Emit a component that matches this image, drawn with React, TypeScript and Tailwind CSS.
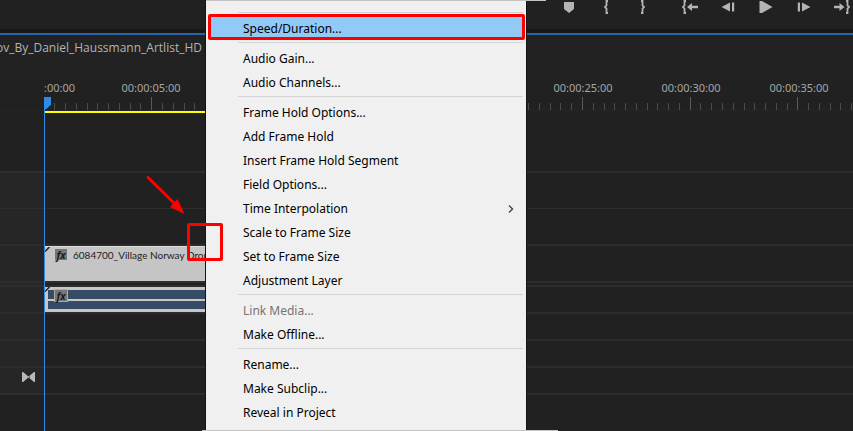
import type { ReactNode } from 'react';
import clsx from 'clsx';

type MenuEntry = {
    label: string;
    active?: boolean;
    disabled?: boolean;
    submenu?: boolean;
};

const MENU_GROUPS: MenuEntry[][] = [
    [{ label: 'Speed/Duration...', active: true }],
    [{ label: 'Audio Gain...' }, { label: 'Audio Channels...' }],
    [
        { label: 'Frame Hold Options...' },
        { label: 'Add Frame Hold' },
        { label: 'Insert Frame Hold Segment' },
        { label: 'Field Options...' },
        { label: 'Time Interpolation', submenu: true },
        { label: 'Scale to Frame Size' },
        { label: 'Set to Frame Size' },
        { label: 'Adjustment Layer' },
    ],
    [{ label: 'Link Media...', disabled: true }, { label: 'Make Offline...' }],
    [{ label: 'Rename...' }, { label: 'Make Subclip...' }, { label: 'Reveal in Project' }],
];

// Labels under the open menu stay empty
const TIMECODES = ['00:00:05:00', '', '', '', '00:00:25:00', '00:00:30:00', '00:00:35:00'];

const TICK_GAP = 10.77;

const BRACE_OPEN = 'M5 1H3.5V5.5L2 7L3.5 8.5V13H5';
const BRACE_CLOSE = 'M1 1H2.5V5.5L4 7L2.5 8.5V13H1';

function ToolButton({ label, width, children }: { label: string; width: number; children: ReactNode }) {
    return (
        <button type="button" aria-label={label} className="flex h-3.5 flex-1 items-center justify-center text-[#b4b4b4]">
            <svg width={width} height="14" viewBox={`0 0 ${width} 14`} fill="currentColor">
                {children}
            </svg>
        </button>
    );
}

function TransportBar() {
    return (
        <div className="flex h-[29px] justify-end gap-2.5 overflow-hidden">
            <div className="flex w-[111px]">
                <ToolButton label="Add Marker" width={10}>
                    <path d="M0 2H10V9L5 13L0 9Z" />
                </ToolButton>
                <ToolButton label="Mark In" width={6}>
                    <path d={BRACE_OPEN} fill="none" stroke="currentColor" strokeWidth="1.8" />
                </ToolButton>
                <ToolButton label="Mark Out" width={6}>
                    <path d={BRACE_CLOSE} fill="none" stroke="currentColor" strokeWidth="1.8" />
                </ToolButton>
            </div>
            <div className="-mr-2 flex w-[190px]">
                <ToolButton label="Go to In" width={18}>
                    <path d={BRACE_OPEN} fill="none" stroke="currentColor" strokeWidth="1.8" />
                    <path d="M6 7L11 3V5.8H17V8.2H11V11Z" />
                </ToolButton>
                <ToolButton label="Step Back" width={14}>
                    <path d="M0.5 7L9 2.5V11.5ZM11 2.5H13.2V11.5H11Z" />
                </ToolButton>
                <ToolButton label="Play" width={14}>
                    <path d="M0.5 1H3L13.5 7L3 13H0.5Z" />
                </ToolButton>
                <ToolButton label="Step Forward" width={14}>
                    <path d="M0.8 2.5H3V11.5H0.8ZM5 2.5L13.5 7L5 11.5Z" />
                </ToolButton>
                <ToolButton label="Go to Out" width={18}>
                    <path d="M11.5 7L6.5 3V5.8H1V8.2H6.5V11Z" />
                    <path d="M13 1H14.5V5.5L16 7L14.5 8.5V13H13" fill="none" stroke="currentColor" strokeWidth="1.8" />
                </ToolButton>
            </div>
        </div>
    );
}

function Ruler() {
    return (
        <div className="border-b border-[#262626]">
            <div className="flex h-4 overflow-hidden text-[11px] leading-4 whitespace-nowrap text-[#a6a6a6]">
                <div className="w-[97px] shrink-0 pl-11">:00:00</div>
                {TIMECODES.map((code, i) => (
                    <div key={i} className="w-[108px] shrink-0 text-center">{code}</div>
                ))}
            </div>
            <svg className="block h-[14px] w-full" aria-hidden="true">
                {Array.from({ length: 180 }, (_, i) => {
                    const major = i % 10 === 0;
                    return (
                        <rect
                            key={i}
                            x={Math.round(43.5 + i * TICK_GAP)}
                            y={major ? 1 : 7}
                            width="1"
                            height={major ? 13 : 7}
                            fill={major ? '#5a5a5a' : '#4c4c4c'}
                        />
                    );
                })}
                <path d="M44 1H51V8.5L46.5 13H44Z" fill="#2d8ceb" />
            </svg>
        </div>
    );
}

function FxBadge() {
    return (
        <span className="flex h-[11px] w-3 shrink-0 items-center justify-center bg-[#777] text-[10px] leading-none font-bold text-[#1c1c1c] italic">
            fx
        </span>
    );
}

function Track({ className, header, children }: { className: string; header?: ReactNode; children?: ReactNode }) {
    return (
        <div className={clsx('flex border-[#2d2d2d]', className)}>
            <div className="flex w-[45px] shrink-0 items-center bg-[#262626]">{header}</div>
            <div className="min-w-0 flex-1">{children}</div>
        </div>
    );
}

function ClipCorner() {
    return (
        <svg className="absolute top-0 left-0" width="5" height="5" aria-hidden="true">
            <path d="M0 4.5L4.5 0" stroke="#222" strokeWidth="1.5" />
        </svg>
    );
}

function Tracks() {
    return (
        <div className="relative flex flex-1 flex-col">
            <div className="h-[62px] border-b-2 border-[#2d2d2d]">
                <div className="ml-[45px] w-[300px] border-t-2 border-[#ffff00]" />
            </div>
            <Track className="h-9 border-b" />
            <Track className="h-[37px] border-b-2" />
            <Track className="h-[37px] border-b-2">
                <div className="relative flex h-full w-[300px] items-start gap-1.5 border-t border-[#dcdcdc] bg-[#c5c5c5] pt-0.5 pl-2.5">
                    <ClipCorner />
                    <FxBadge />
                    <span className="font-['Lato','Noto_Sans',sans-serif] text-[10px] leading-3 whitespace-nowrap text-[#1c1c1c]">
                        6084700_Village Norway Dron
                    </span>
                </div>
            </Track>
            <Track className="h-1 border-b-2" />
            <Track className="h-[27px] border-b-2">
                <div className="relative h-full w-[300px] bg-[#c9c6c6] py-[3px] pl-[3px]">
                    <div className="flex h-full flex-col gap-0.5">
                        <div className="flex-1 bg-[#354b66]" />
                        <div className="flex-1 bg-[#354b66]" />
                    </div>
                    <ClipCorner />
                    <div className="absolute top-0.5 left-[9px] border border-[#aaa]">
                        <FxBadge />
                    </div>
                </div>
            </Track>
            <Track className="h-[27px] border-b-2" />
            <Track className="h-[27px] border-b-2" />
            <Track
                className="h-[27px] border-b-2"
                header={
                    <svg className="mb-2 ml-[22px]" width="13" height="10" viewBox="0 0 13 10" fill="#b9b9b9" aria-hidden="true">
                        <path d="M0 0H1L5.5 3.8V6.2L1 10H0ZM13 0H12L7.5 3.8V6.2L12 10H13ZM5 4.3H8V5.7H5Z" />
                    </svg>
                }
            />
            <div className="min-h-8 flex-1" />
            <div className="absolute -top-2 bottom-0 left-11 w-px bg-[#2d8ceb]" />
        </div>
    );
}

function ContextMenu() {
    return (
        <div
            role="menu"
            className="absolute top-0 left-[206px] w-[320px] border-t border-[#b9b9b9] bg-[#f0f0f0] pt-2.5 pb-[5px] text-xs text-black shadow-[0_0_0_1px_#141414]"
        >
            {MENU_GROUPS.map((group, i) => (
                <div key={i}>
                    <div className="mr-[3px] ml-8 h-1.5 pt-px">
                        <div className="h-px bg-[#d4d4d4]" />
                    </div>
                    {group.map(item => (
                        <button
                            key={item.label}
                            type="button"
                            role="menuitem"
                            disabled={item.disabled}
                            className={clsx(
                                'relative flex h-6 w-full items-center justify-between pr-3 pl-[37px] leading-6 whitespace-nowrap',
                                item.disabled && 'text-[#747474]'
                            )}
                        >
                            {item.active && (
                                <span className="absolute -top-[3px] right-px bottom-px left-0.5 rounded-xs border-3 border-[#ff0000] bg-[#91c9f7]" />
                            )}
                            <span className="relative">{item.label}</span>
                            {item.submenu && (
                                <svg width="6" height="8" viewBox="0 0 6 8" fill="none" stroke="#444" strokeWidth="1.4" aria-hidden="true">
                                    <path d="M1 0.5L4.5 4L1 7.5" />
                                </svg>
                            )}
                        </button>
                    ))}
                </div>
            ))}
            {/* light edges that run past the menu's sides */}
            <div className="absolute -top-px -right-5 left-0 h-px bg-[#c4c4c4]" />
            <div className="absolute -right-8 -bottom-px -left-1 h-px bg-[#c4c4c4]" />
        </div>
    );
}

function Callout() {
    return (
        <>
            <svg className="absolute top-[174px] left-[144px]" width="42" height="42" viewBox="0 0 42 42" aria-hidden="true">
                <path d="M4 3.5L31 30" stroke="#ff0000" strokeWidth="3" strokeLinecap="round" />
                <path d="M40.5 40L26 33L33.5 25Z" fill="#ff0000" />
            </svg>
            <div className="absolute top-[223px] left-[187px] h-[38px] w-9 rounded-xs border-3 border-[#ff0000]" />
        </>
    );
}

export default function App() {
    return (
        <div className="relative flex min-h-screen flex-col overflow-hidden bg-[#212121] font-['Noto_Sans',sans-serif]">
            <TransportBar />
            <div className="h-1 bg-[#181818]" />
            <div className="border-t-2 border-[#2765a8] bg-[#222] pt-1 pb-[23px]">
                <div className="-ml-1 font-['Open_Sans',sans-serif] text-xs leading-[18px] whitespace-nowrap text-[#b4b4b4]">
                    ov_By_Daniel_Haussmann_Artlist_HD
                </div>
            </div>
            <Ruler />
            <Tracks />
            <ContextMenu />
            <Callout />
        </div>
    );
}
